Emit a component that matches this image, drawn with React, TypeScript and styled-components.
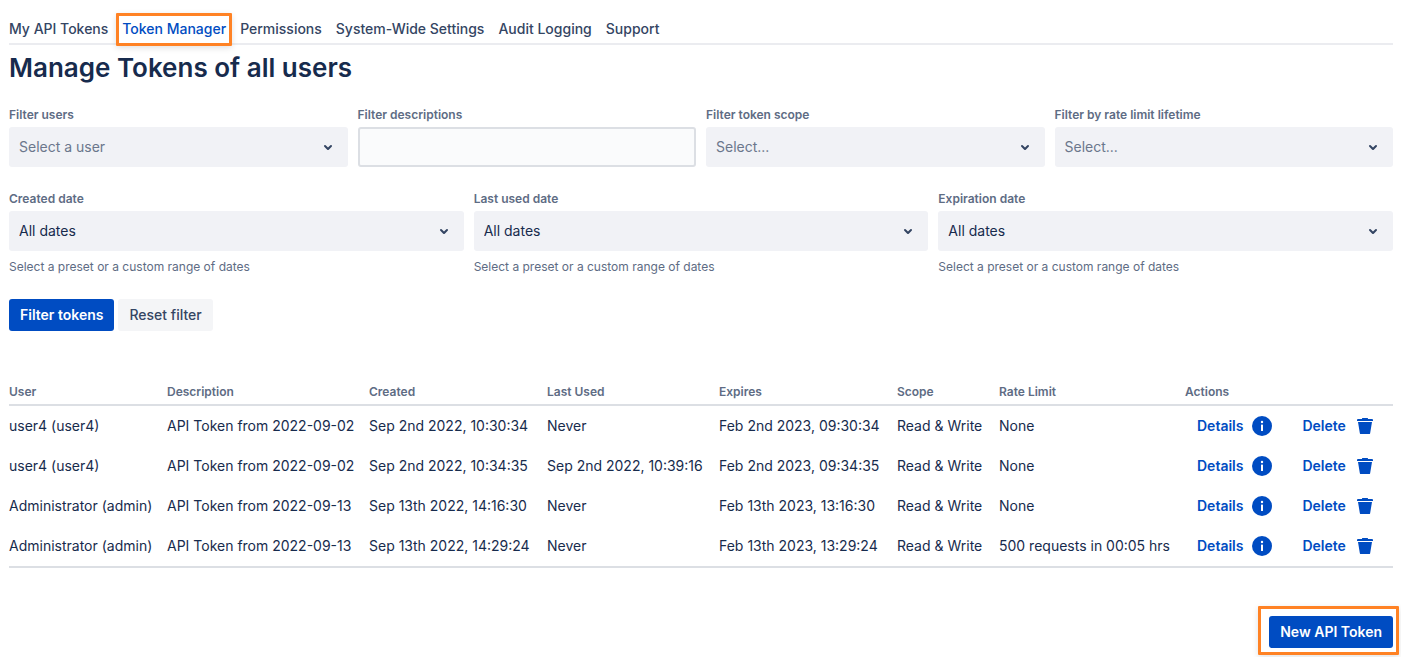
import React, { useId } from "react";
import styled, { createGlobalStyle, css } from "styled-components";

const GlobalStyle = createGlobalStyle`
  *, *::before, *::after { box-sizing: border-box; }
  body {
    margin: 0;
    background: #ffffff;
    color: #172b4d;
    font-family: Inter, "Liberation Sans", sans-serif;
    font-size: 14px;
    line-height: 20px;
  }
`;

const highlight = "#ff8224";

const Page = styled.div`
  padding: 12px 8px 9px 9px;
`;

const Tabs = styled.nav`
  display: flex;
  gap: 14px;
  height: 33px;
  border-bottom: 2px solid #ebecf0;
`;

const Tab = styled.a<{ $active?: boolean }>`
  position: relative;
  padding: 7px 0 4px;
  color: ${(p) => (p.$active ? "#004cc2" : "#344563")};
  font-weight: 500;
  text-decoration: none;
  white-space: nowrap;

  ${(p) =>
    p.$active &&
    css`
      &::after {
        content: "";
        position: absolute;
        inset: 1px -6px -3px;
        border: 3px solid ${highlight};
        border-radius: 1px;
        box-shadow: 0 2px 6px rgba(0, 0, 0, 0.12);
      }
    `}
`;

const Title = styled.h1`
  margin: 7px 0 0;
  color: #172b4d;
  font-size: 26px;
  font-weight: 600;
  line-height: 32px;
`;

const Filters = styled.form`
  margin-top: 22px;
`;

const FilterRow = styled.div<{ $columns: number }>`
  display: grid;
  grid-template-columns: repeat(${(p) => p.$columns}, minmax(0, 1fr));
  gap: 10px;

  & + & {
    margin-top: 23px;
  }
`;

const Field = styled.div`
  display: flex;
  flex-direction: column;
`;

const Label = styled.label`
  margin-bottom: 4px;
  color: #5e6c84;
  font-size: 12px;
  font-weight: 600;
  line-height: 17px;
`;

const SelectBox = styled.div`
  display: grid;
  align-items: center;

  > * {
    grid-area: 1 / 1;
  }

  svg {
    justify-self: end;
    margin-right: 8px;
    color: #344563;
    pointer-events: none;
  }
`;

const Select = styled.select<{ $muted?: boolean }>`
  appearance: none;
  width: 100%;
  height: 40px;
  padding: 0 40px 0 10px;
  border: 0;
  border-radius: 3px;
  background: #f1f2f6;
  color: ${(p) => (p.$muted ? "#6b778c" : "#172b4d")};
  font: inherit;
`;

const TextInput = styled.input`
  width: 100%;
  height: 40px;
  padding: 0 8px;
  border: 2px solid #dcdfe4;
  border-radius: 3px;
  background: #fafbfc;
  color: #172b4d;
  font: inherit;
`;

const Helper = styled.small`
  margin-top: 8px;
  color: #5e6c84;
  font-size: 12px;
  line-height: 16px;
`;

const ButtonRow = styled.div`
  display: flex;
  gap: 4px;
  margin-top: 24px;
`;

const Button = styled.button<{ $primary?: boolean }>`
  height: 32px;
  padding: 0 11px;
  border: 0;
  border-radius: 3px;
  background: ${(p) => (p.$primary ? "#004cc2" : "#f4f5f7")};
  color: ${(p) => (p.$primary ? "#ffffff" : "#344563")};
  font: inherit;
  font-weight: ${(p) => (p.$primary ? 600 : 500)};
  white-space: nowrap;
`;

const Table = styled.table`
  width: 100%;
  margin-top: 48px;
  border-bottom: 2px solid #dcdfe4;
  border-collapse: separate;
  border-spacing: 0;
`;

const HeadCell = styled.th<{ $width?: number }>`
  width: ${(p) => (p.$width ? `${p.$width}px` : "auto")};
  padding: 4px 14px 4px 0;
  border-bottom: 2px solid #dcdfe4;
  color: #5e6c84;
  font-size: 12px;
  font-weight: 600;
  line-height: 17px;
  text-align: left;
  white-space: nowrap;
`;

const Cell = styled.td`
  height: 40px;
  padding: 0 14px 0 0;
  white-space: nowrap;

  &:last-child {
    padding-right: 0;
  }
`;

const Actions = styled.div`
  display: flex;
  gap: 4px;
`;

const ActionButton = styled.button`
  display: inline-flex;
  align-items: center;
  gap: 7px;
  height: 32px;
  padding: 0 12px;
  border: 0;
  background: none;
  color: #004cc2;
  font: inherit;
  font-weight: 600;
`;

const Footer = styled.footer`
  display: flex;
  justify-content: flex-end;
  margin-top: 48px;
`;

const Callout = styled.div`
  position: relative;
  display: flex;

  &::after {
    content: "";
    position: absolute;
    inset: -10px -6px -7px -11px;
    border: 3px solid ${highlight};
    border-radius: 1px;
    box-shadow: 0 2px 6px rgba(0, 0, 0, 0.12);
    pointer-events: none;
  }
`;

const Chevron = () => (
  <svg width="24" height="24" viewBox="0 0 24 24" aria-hidden="true">
    <path
      fill="currentColor"
      d="M8.292 10.293a1.009 1.009 0 000 1.419l2.939 2.965c.218.215.5.322.779.322s.556-.107.769-.322l2.93-2.955a1.01 1.01 0 000-1.419.987.987 0 00-1.406 0l-2.298 2.317-2.307-2.327a.99.99 0 00-1.406 0z"
    />
  </svg>
);

const InfoIcon = () => (
  <svg width="24" height="24" viewBox="0 0 24 24" aria-hidden="true">
    <circle cx="12" cy="12" r="10" fill="#004cc2" />
    <rect x="11" y="10.5" width="2" height="6.5" rx="0.6" fill="#fff" />
    <circle cx="12" cy="8" r="1.2" fill="#fff" />
  </svg>
);

const TrashIcon = () => (
  <svg width="24" height="24" viewBox="0 0 24 24" aria-hidden="true">
    <path
      fill="#004cc2"
      d="M5 5a1 1 0 00-1 1v1h16V6a1 1 0 00-1-1H5zm11.15 15H7.845a1 1 0 01-.986-.835L5 8h14l-1.864 11.166a.999.999 0 01-.986.834M9 4.5a.5.5 0 01.491-.5h5.018a.5.5 0 01.491.5V5H9v-.5z"
    />
  </svg>
);

interface SelectFieldProps {
  label: string;
  value: string;
  muted?: boolean;
  helper?: string;
}

const SelectField = ({ label, value, muted, helper }: SelectFieldProps) => {
  const id = useId();
  return (
    <Field>
      <Label htmlFor={id}>{label}</Label>
      <SelectBox>
        <Select id={id} $muted={muted} aria-describedby={helper ? `${id}-help` : undefined}>
          <option>{value}</option>
        </Select>
        <Chevron />
      </SelectBox>
      {helper && <Helper id={`${id}-help`}>{helper}</Helper>}
    </Field>
  );
};

const tabs = [
  "My API Tokens",
  "Token Manager",
  "Permissions",
  "System-Wide Settings",
  "Audit Logging",
  "Support",
];

const columns: { name: string; width?: number }[] = [
  { name: "User", width: 158 },
  { name: "Description", width: 202 },
  { name: "Created", width: 178 },
  { name: "Last Used", width: 172 },
  { name: "Expires", width: 178 },
  { name: "Scope", width: 102 },
  { name: "Rate Limit", width: 186 },
  { name: "Actions" },
];

const tokens = [
  ["user4 (user4)", "API Token from 2022-09-02", "Sep 2nd 2022, 10:30:34", "Never", "Feb 2nd 2023, 09:30:34", "Read & Write", "None"],
  ["user4 (user4)", "API Token from 2022-09-02", "Sep 2nd 2022, 10:34:35", "Sep 2nd 2022, 10:39:16", "Feb 2nd 2023, 09:34:35", "Read & Write", "None"],
  ["Administrator (admin)", "API Token from 2022-09-13", "Sep 13th 2022, 14:16:30", "Never", "Feb 13th 2023, 13:16:30", "Read & Write", "None"],
  ["Administrator (admin)", "API Token from 2022-09-13", "Sep 13th 2022, 14:29:24", "Never", "Feb 13th 2023, 13:29:24", "Read & Write", "500 requests in 00:05 hrs"],
];

const dateFilters = ["Created date", "Last used date", "Expiration date"];

export default function App() {
  return (
    <>
      <GlobalStyle />
      <Page>
        <Tabs>
          {tabs.map((tab) => (
            <Tab key={tab} href="#" $active={tab === "Token Manager"}>
              {tab}
            </Tab>
          ))}
        </Tabs>
        <main>
          <Title>Manage Tokens of all users</Title>
          <Filters onSubmit={(e) => e.preventDefault()}>
            <FilterRow $columns={4}>
              <SelectField label="Filter users" value="Select a user" muted />
              <Field>
                <Label htmlFor="descriptions">Filter descriptions</Label>
                <TextInput id="descriptions" type="text" />
              </Field>
              <SelectField label="Filter token scope" value="Select..." muted />
              <SelectField label="Filter by rate limit lifetime" value="Select..." muted />
            </FilterRow>
            <FilterRow $columns={3}>
              {dateFilters.map((label) => (
                <SelectField
                  key={label}
                  label={label}
                  value="All dates"
                  helper="Select a preset or a custom range of dates"
                />
              ))}
            </FilterRow>
            <ButtonRow>
              <Button type="submit" $primary>
                Filter tokens
              </Button>
              <Button type="reset">Reset filter</Button>
            </ButtonRow>
          </Filters>
          <Table>
            <thead>
              <tr>
                {columns.map((column) => (
                  <HeadCell key={column.name} scope="col" $width={column.width}>
                    {column.name}
                  </HeadCell>
                ))}
              </tr>
            </thead>
            <tbody>
              {tokens.map((token) => (
                <tr key={token[2]}>
                  {token.map((value, i) => (
                    <Cell key={i}>{value}</Cell>
                  ))}
                  <Cell>
                    <Actions>
                      <ActionButton type="button">
                        Details
                        <InfoIcon />
                      </ActionButton>
                      <ActionButton type="button">
                        Delete
                        <TrashIcon />
                      </ActionButton>
                    </Actions>
                  </Cell>
                </tr>
              ))}
            </tbody>
          </Table>
        </main>
        <Footer>
          <Callout>
            <Button type="button" $primary>
              New API Token
            </Button>
          </Callout>
        </Footer>
      </Page>
    </>
  );
}
